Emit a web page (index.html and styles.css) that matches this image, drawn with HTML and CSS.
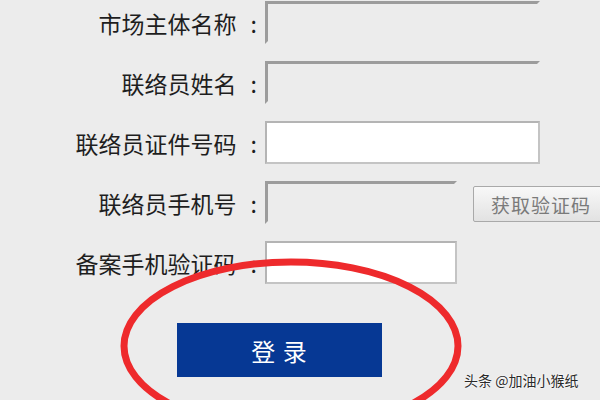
FILE: index.html
```html
<!DOCTYPE html>
<html lang="zh-CN">
<head>
    <meta charset="UTF-8">
    <meta name="viewport" content="width=device-width, initial-scale=1.0">
    <title>联络员登录</title>
    <link rel="stylesheet" href="styles.css">
</head>
<body>
    <div class="page">
        <form class="login-form">
            <div class="form-row">
                <label class="form-label">市场主体名称<span class="colon">:</span></label>
                <input class="field field-disabled field-wide" type="text" disabled>
            </div>
            <div class="form-row">
                <label class="form-label">联络员姓名<span class="colon">:</span></label>
                <input class="field field-disabled field-wide" type="text" disabled>
            </div>
            <div class="form-row">
                <label class="form-label">联络员证件号码<span class="colon">:</span></label>
                <input class="field field-wide" type="text">
            </div>
            <div class="form-row">
                <label class="form-label">联络员手机号<span class="colon">:</span></label>
                <div class="field-group">
                    <input class="field field-disabled field-short" type="text" disabled>
                    <button type="button" class="code-btn">获取验证码</button>
                </div>
            </div>
            <div class="form-row">
                <label class="form-label">备案手机验证码<span class="colon">:</span></label>
                <input class="field field-short" type="text">
            </div>
            <div class="submit-row">
                <button type="button" class="login-btn">登 录</button>
            </div>
        </form>

        <!-- red circle drawn over the login button -->
        <svg class="highlight" width="600" height="400" viewBox="0 0 600 400">
            <ellipse cx="291" cy="346" rx="167" ry="84" fill="none" stroke="#ee2a2c" stroke-width="7"/>
        </svg>

        <div class="watermark">头条 @加油小猴纸</div>
    </div>
</body>
</html>
```

FILE: styles.css
```css
body {
    margin: 0;
    background-color: #ececec;
    font-family: "Microsoft YaHei", "Noto Sans CJK SC", "Noto Sans", sans-serif;
    color: #1e1e1e;
}
.page {
    position: relative;
    width: 600px;
    height: 400px;
    overflow: hidden;
}
.login-form {
    display: flex;
    flex-direction: column;
    gap: 17px;
    padding-top: 1px;
}
.form-row {
    display: grid;
    grid-template-columns: 257px auto;
    column-gap: 8px;
    align-items: center;
    height: 43px;
}
.form-label {
    text-align: right;
    font-size: 23px;
    line-height: 30px;
}
.colon {
    margin-left: 14px;
}
.field {
    box-sizing: border-box;
    height: 43px;
    margin: 0;
    padding: 0 8px;
    background-color: #fff;
    border: 2px solid #c4c4c4;
    border-top-color: #b4b4b4;
    border-left-color: #b4b4b4;
    font-size: 16px;
}
.field-disabled {
    background-color: #ececec;
    border: 3px solid #ececec;
    border-top-color: #9c9c9c;
    border-left-color: #9c9c9c;
}
.field-wide {
    width: 275px;
}
.field-short {
    width: 192px;
}
.field-group {
    display: flex;
    align-items: center;
    gap: 16px;
}
.code-btn {
    flex-shrink: 0;
    width: 140px;
    height: 36px;
    margin-top: 3px;
    padding: 0 0 0 17px;
    text-align: left;
    background: linear-gradient(#f8f8f8, #e2e2e2);
    border: 1px solid #a9a9a9;
    border-radius: 2px;
    color: #7a7a7a;
    font-family: inherit;
    font-size: 19px;
    letter-spacing: 1px;
}
.submit-row {
    padding-top: 22px;
    padding-left: 177px;
}
.login-btn {
    width: 205px;
    height: 54px;
    padding: 0;
    background-color: #063894;
    border: none;
    color: #fff;
    font-family: inherit;
    font-size: 24px;
    letter-spacing: 1px;
}
.highlight {
    position: absolute;
    left: 0;
    top: 0;
    pointer-events: none;
}
.watermark {
    position: absolute;
    left: 464px;
    top: 370px;
    font-size: 14px;
    color: #2a2a2a;
    text-shadow: 0 0 2px #fff, 0 0 2px #fff;
}
```
